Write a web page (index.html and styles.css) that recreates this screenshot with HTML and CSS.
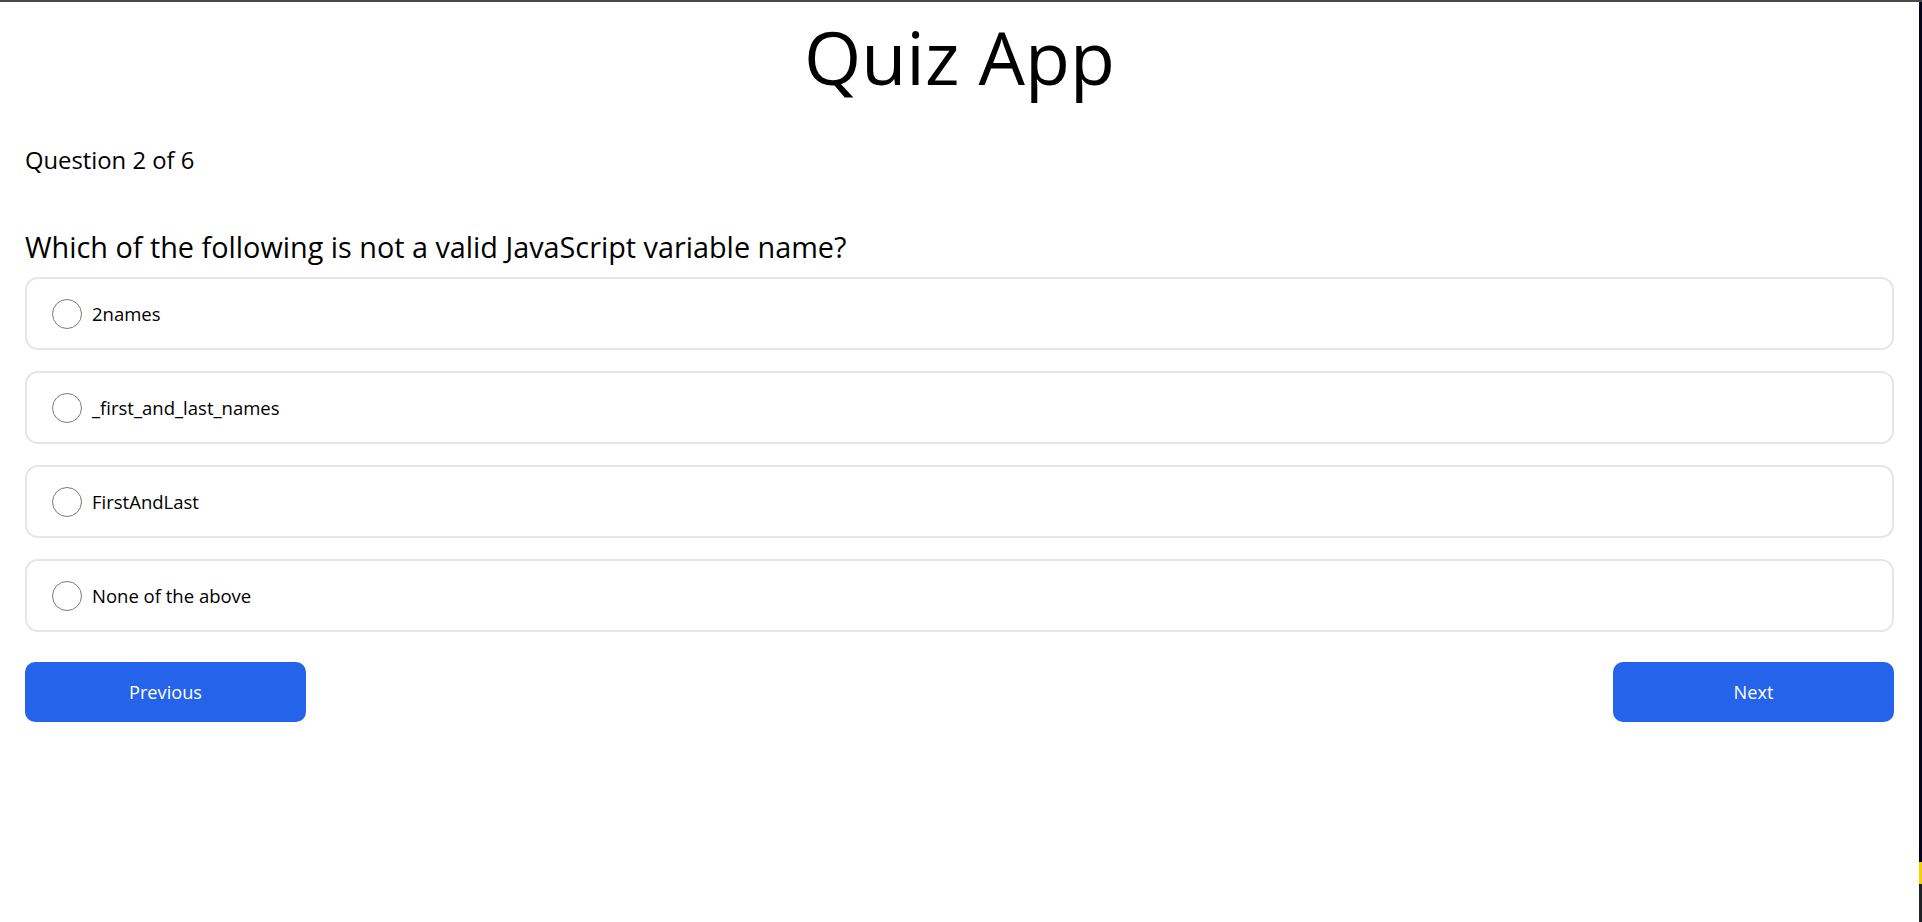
FILE: index.html
```html
<!DOCTYPE html>
<html lang="en">
<head>
<meta charset="utf-8">
<title>Quiz App</title>
<link rel="stylesheet" href="styles.css">
</head>
<body>
<div class="frame">
  <main class="app">
    <h1 class="title">Quiz App</h1>
    <p class="progress">Question 2 of 6</p>
    <h2 class="question">Which of the following is not a valid JavaScript variable name?</h2>
    <div class="options">
      <label class="option"><span class="radio"></span><span class="option-text">2names</span></label>
      <label class="option"><span class="radio"></span><span class="option-text">_first_and_last_names</span></label>
      <label class="option"><span class="radio"></span><span class="option-text">FirstAndLast</span></label>
      <label class="option"><span class="radio"></span><span class="option-text">None of the above</span></label>
    </div>
    <div class="nav">
      <button class="btn">Previous</button>
      <button class="btn">Next</button>
    </div>
  </main>
  <div class="edge">
    <div class="edge-top"></div>
    <div class="edge-mark"></div>
    <div class="edge-bottom"></div>
  </div>
</div>
</body>
</html>
```
FILE: styles.css
```css
* { box-sizing: border-box; }
html, body { margin: 0; padding: 0; height: 100%; background: #fff; }
body {
  font-family: "Open Sans", "Noto Sans", sans-serif;
  color: #000;
}
.frame {
  display: flex;
  height: 922px;
  border-top: 2px solid #4a4a4c;
}
.app {
  flex: 1;
  padding: 0 25px;
}
.edge {
  width: 3px;
  display: flex;
  flex-direction: column;
}
.edge-top { height: 860px; background: #06031f; }
.edge-mark { height: 22px; background: #f5d000; }
.edge-bottom { flex: 1; background: #1f2229; }

.title {
  margin: 10px 0 0;
  font-size: 73.5px;
  font-weight: 400;
  line-height: 90px;
  text-align: center;
}
.progress {
  margin: 43px 0 0;
  font-size: 23.8px;
  line-height: 30px;
}
.question {
  margin: 54px 0 0;
  font-size: 28.8px;
  font-weight: 400;
  line-height: 36px;
}
.options {
  margin-top: 12px;
  display: flex;
  flex-direction: column;
  gap: 21px;
}
.option {
  display: flex;
  align-items: center;
  height: 73px;
  padding: 0 25px;
  border: 2px solid #e5e5ea;
  border-radius: 13px;
}
.radio {
  width: 30px;
  height: 30px;
  border: 1.5px solid #7a7a7a;
  border-radius: 50%;
  margin-right: 10px;
  flex: none;
}
.option-text {
  font-size: 18.5px;
  line-height: 24px;
}
.nav {
  margin-top: 30px;
  display: flex;
  justify-content: space-between;
}
.btn {
  width: 281px;
  height: 60px;
  border: none;
  border-radius: 10px;
  background: #2563eb;
  color: #fff;
  font-family: inherit;
  font-size: 18.2px;
}
```
